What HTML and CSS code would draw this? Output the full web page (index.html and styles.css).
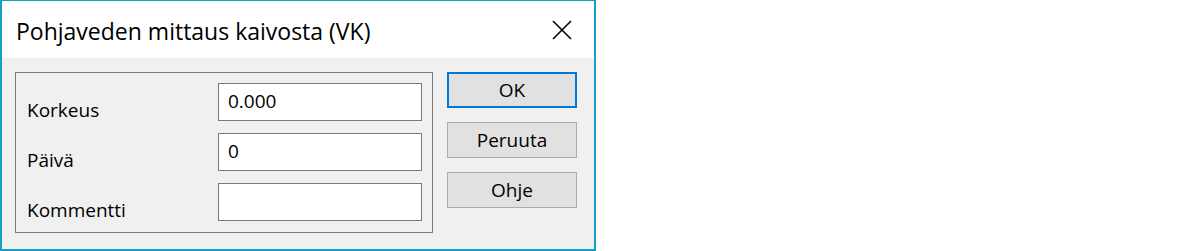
FILE: index.html
```html
<!DOCTYPE html>
<html lang="fi">
<head>
  <meta charset="UTF-8">
  <title>Pohjaveden mittaus kaivosta (VK)</title>
  <link rel="stylesheet" href="styles.css">
</head>
<body>
  <div class="window">
    <div class="titlebar">
      <span class="title">Pohjaveden mittaus kaivosta (VK)</span>
      <svg class="close" width="20" height="20" viewBox="0 0 20 20">
        <path d="M1 1 L19 19 M19 1 L1 19" stroke="#000" stroke-width="1.6" fill="none"/>
      </svg>
    </div>

    <div class="content">
      <div class="group">
        <div class="row">
          <label>Korkeus</label>
          <input type="text" value="0.000">
        </div>
        <div class="row">
          <label>Päivä</label>
          <input type="text" value="0">
        </div>
        <div class="row">
          <label>Kommentti</label>
          <input type="text" value="">
        </div>
      </div>

      <div class="buttons">
        <button class="btn default">OK</button>
        <button class="btn">Peruuta</button>
        <button class="btn">Ohje</button>
      </div>
    </div>
  </div>
</body>
</html>
```

FILE: styles.css
```css
body {
  margin: 0;
  background: #fff;
  font-family: 'Open Sans', 'Noto Sans', sans-serif;
}
.window {
  width: 596px;
  height: 251px;
  box-sizing: border-box;
  border: 2px solid #1a9fc4;
  border-top-width: 1px;
  display: flex;
  flex-direction: column;
}
.titlebar {
  height: 57px;
  background: #fff;
  display: flex;
  align-items: center;
  justify-content: space-between;
  padding: 0 22px 0 14px;
}
.title {
  font-size: 23px;
  color: #000;
  padding-top: 2px;
}
.close {
  display: block;
}
.content {
  flex: 1;
  background: #f0f0f0;
  display: flex;
  align-items: flex-start;
  padding: 14px 0 0 13px;
}
.group {
  width: 418px;
  height: 161px;
  box-sizing: border-box;
  border: 1px solid #7a7a7a;
  padding: 10px 0 0 11px;
  display: flex;
  flex-direction: column;
  gap: 12px;
}
.row {
  display: flex;
  height: 38px;
}
.row label {
  width: 191px;
  align-self: flex-end;
  font-size: 19px;
  line-height: 22px;
  color: #000;
}
.row input {
  width: 204px;
  height: 38px;
  box-sizing: border-box;
  border: 1px solid #7a7a7a;
  background: #fff;
  margin: 0;
  padding: 0 9px 3px;
  font-family: inherit;
  font-size: 19px;
  color: #000;
  outline: none;
}
.buttons {
  margin-left: 14px;
  display: flex;
  flex-direction: column;
  gap: 14px;
}
.btn {
  width: 130px;
  height: 36px;
  box-sizing: border-box;
  background: #e1e1e1;
  border: 1px solid #adadad;
  font-family: inherit;
  font-size: 19px;
  color: #000;
  padding: 0;
}
.btn.default {
  border: 2px solid #0078d7;
}
```
